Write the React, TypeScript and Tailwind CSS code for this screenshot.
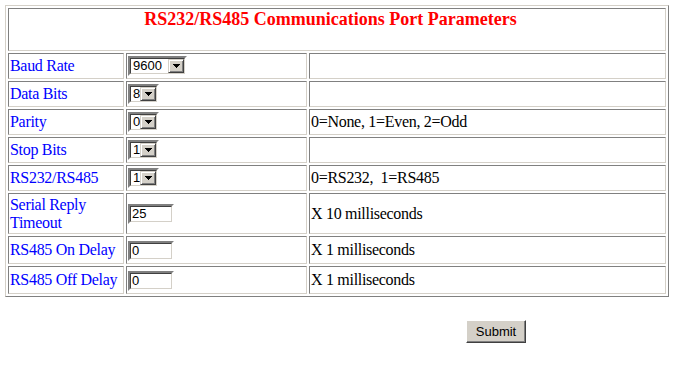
import React from "react";

const serif = "font-['Liberation_Serif','Times_New_Roman',serif]";
const sans = "font-['Liberation_Sans',Arial,sans-serif]";

const cell =
	"flex items-center px-[1px] border border-t-[#808080] border-l-[#808080] border-b-[#d4d0c8] border-r-[#d4d0c8] overflow-hidden";

function Arrow() {
	return (
		<svg width="7" height="4" viewBox="0 0 7 4" shapeRendering="crispEdges">
			<polygon points="0,0 7,0 3.5,4" fill="#000" />
		</svg>
	);
}

function Select({ value, width }: { value: string; width: string }) {
	return (
		<div
			className={`flex h-[20px] ${width} border-2 border-t-[#808080] border-l-[#808080] border-b-white border-r-white bg-white`}
		>
			<div className="flex-1 flex items-stretch border border-t-[#404040] border-l-[#404040] border-b-[#d4d0c8] border-r-[#d4d0c8]">
				<span className={`flex-1 flex items-center pl-[2px] text-[13px] leading-[14px] text-black ${sans}`}>
					{value}
				</span>
				<div className="w-[16px] flex items-center justify-center bg-[#d4d0c8] border border-t-[#d4d0c8] border-l-[#d4d0c8] border-b-[#404040] border-r-[#404040] shadow-[inset_1px_1px_0_#fff,inset_-1px_-1px_0_#808080]">
					<Arrow />
				</div>
			</div>
		</div>
	);
}

function Input({ value }: { value: string }) {
	return (
		<div className="mt-[1px] h-[20px] w-[46px] border-2 border-t-[#808080] border-l-[#808080] border-b-white border-r-white bg-white">
			<div className="h-full flex items-center border border-t-[#404040] border-l-[#404040] border-b-[#d4d0c8] border-r-[#d4d0c8]">
				<span className={`pl-[1px] text-[13px] leading-[14px] text-black ${sans}`}>{value}</span>
			</div>
		</div>
	);
}

type Row = { label: React.ReactNode; control: React.ReactNode; note?: string };

const rows: Row[] = [
	{ label: "Baud Rate", control: <Select value="9600" width="w-[59px]" /> },
	{ label: "Data Bits", control: <Select value="8" width="w-[31px]" /> },
	{ label: "Parity", control: <Select value="0" width="w-[31px]" />, note: "0=None, 1=Even, 2=Odd" },
	{ label: "Stop Bits", control: <Select value="1" width="w-[31px]" /> },
	{ label: "RS232/RS485", control: <Select value="1" width="w-[31px]" />, note: "0=RS232,\u00a0 1=RS485" },
	{
		label: (
			<>
				Serial Reply
				<br />
				Timeout
			</>
		),
		control: <Input value="25" />,
		note: "X 10 milliseconds",
	},
	{ label: "RS485 On Delay", control: <Input value="0" />, note: "X 1 milliseconds" },
	{ label: "RS485 Off Delay", control: <Input value="0" />, note: "X 1 milliseconds" },
];

export default function App() {
	return (
		<div className="min-h-screen bg-white pt-[5px] pl-[5px]">
			<div
				className={`grid w-[664px] grid-cols-[116px_181px_357px] grid-rows-[43px_26px_26px_26px_26px_26px_41px_28px_28px] gap-[2px] p-[2px] border border-t-[#d4d0c8] border-l-[#d4d0c8] border-b-[#808080] border-r-[#808080] ${serif}`}
			>
				<div className={`col-span-3 ${cell} !items-start justify-center pr-[14px]`}>
					<span className="text-[18px] leading-[20px] font-bold text-[#ff0000]">
						RS232/RS485 Communications Port Parameters
					</span>
				</div>
				{rows.map((r, i) => (
					<React.Fragment key={i}>
						<div className={`${cell} text-[16px] leading-[18px] tracking-[-0.3px] text-[#0000ff]`}>
							<span>{r.label}</span>
						</div>
						<div className={cell}>{r.control}</div>
						<div className={`${cell} text-[16px] leading-[18px] tracking-[-0.3px] text-black`}>
							{r.note ?? ""}
						</div>
					</React.Fragment>
				))}
			</div>
			<div className="mt-[21px] ml-[461px]">
				<button
					className={`h-[23px] w-[60px] bg-[#d4d0c8] text-[13px] text-black border border-t-white border-l-white border-b-[#404040] border-r-[#404040] shadow-[inset_-1px_-1px_0_#808080] ${sans}`}
				>
					Submit
				</button>
			</div>
		</div>
	);
}
